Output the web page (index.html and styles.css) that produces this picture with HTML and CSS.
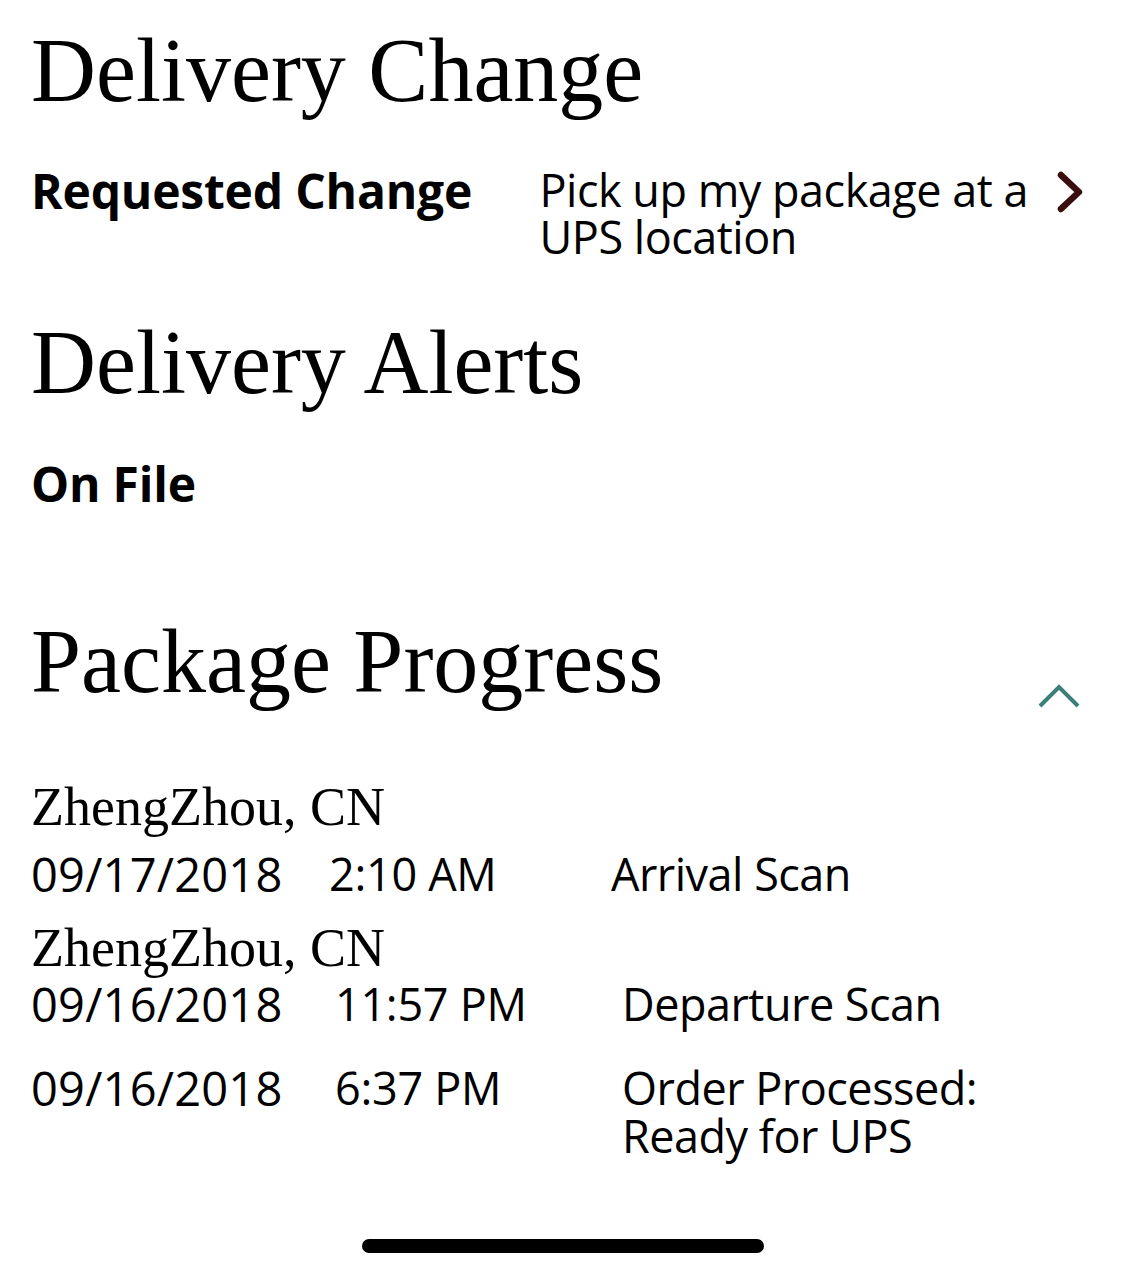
FILE: index.html
```html
<!DOCTYPE html>
<html lang="en">
<head>
<meta charset="UTF-8">
<meta name="viewport" content="width=device-width, initial-scale=1.0">
<title>Delivery Details</title>
<link rel="stylesheet" href="styles.css">
</head>
<body>

<div class="screen">
  <h1 class="title first">Delivery Change</h1>

  <div class="change-row">
    <div class="label">Requested Change</div>
    <div class="change-value">Pick up my package at a UPS location</div>
    <svg class="chevron-right" viewBox="0 0 30 44" width="30" height="44">
      <path d="M6 5 L24 22 L6 39" fill="none" stroke="#3a0d0f" stroke-width="6.5" stroke-linecap="round" stroke-linejoin="round"/>
    </svg>
  </div>

  <h1 class="title alerts">Delivery Alerts</h1>
  <div class="label">On File</div>

  <div class="progress-head">
    <h1 class="title">Package Progress</h1>
    <svg class="chevron-up" viewBox="0 0 44 26" width="44" height="26">
      <path d="M3 23 L22 4 L41 23" fill="none" stroke="#3b7f78" stroke-width="4"/>
    </svg>
  </div>

  <div class="events">
    <div class="city">ZhengZhou, CN</div>
    <div class="event first-event">
      <span class="date">09/17/2018</span>
      <span class="time">2:10 AM</span>
      <span class="desc">Arrival Scan</span>
    </div>

    <div class="city">ZhengZhou, CN</div>
    <div class="event">
      <span class="date wide">09/16/2018</span>
      <span class="time wide">11:57 PM</span>
      <span class="desc">Departure Scan</span>
    </div>
    <div class="event">
      <span class="date wide">09/16/2018</span>
      <span class="time wide">6:37 PM</span>
      <span class="desc">
        <span class="desc-line">Order Processed:</span>
        <span class="desc-line">Ready for UPS</span>
      </span>
    </div>
  </div>

  <div class="home-bar"></div>
</div>

</body>
</html>
```

FILE: styles.css
```css
body {
  margin: 0;
  padding: 0;
  background-color: #fff;
  color: #000;
  font-family: "Open Sans", "Noto Sans", sans-serif;
}
.screen {
  width: 1125px;
  height: 1278px;
  padding: 0 40px 0 31px;
  box-sizing: border-box;
  position: relative;
}
.title {
  font-family: "Liberation Serif", "DejaVu Serif", serif;
  font-weight: normal;
  font-size: 90px;
  line-height: 1;
  margin: 0;
}
.title.first {
  padding-top: 26px;
}
.change-row {
  display: flex;
  align-items: flex-start;
  margin-top: 45px;
}
.label {
  font-weight: bold;
  font-size: 48px;
  line-height: 60px;
  letter-spacing: -0.2px;
}
.change-row .label {
  width: 510px;
}
.change-value {
  font-size: 45px;
  line-height: 47px;
  width: 500px;
  letter-spacing: -0.5px;
  padding-top: 5px;
}
.chevron-right {
  margin-left: 17px;
  margin-top: 9px;
}
.alerts {
  margin-top: 58px;
  margin-bottom: 46px;
}
.progress-head {
  display: flex;
  justify-content: space-between;
  align-items: flex-end;
  margin-top: 103px;
}
.chevron-up {
  margin-bottom: -2px;
  margin-right: 4px;
}
.events {
  margin-top: 70px;
}
.city {
  font-family: "Liberation Serif", "DejaVu Serif", serif;
  font-size: 54px;
  line-height: 60px;
}
.event {
  display: flex;
  font-size: 45px;
  line-height: 48px;
  margin-bottom: 36px;
}
.city + .event {
  margin-top: 2px;
}
.event.first-event {
  margin-top: 13px;
  margin-bottom: 20px;
}
.date {
  width: 298px;
  font-size: 47px;
  letter-spacing: 0.2px;
}
.date.wide {
  width: 304px;
}
.time {
  width: 282px;
  letter-spacing: -0.3px;
}
.time.wide {
  width: 287px;
}
.desc {
  letter-spacing: -0.5px;
}
.desc-line {
  display: block;
}
.home-bar {
  position: absolute;
  left: 362px;
  top: 1239px;
  width: 402px;
  height: 14px;
  border-radius: 7px;
  background: #000;
}
```
